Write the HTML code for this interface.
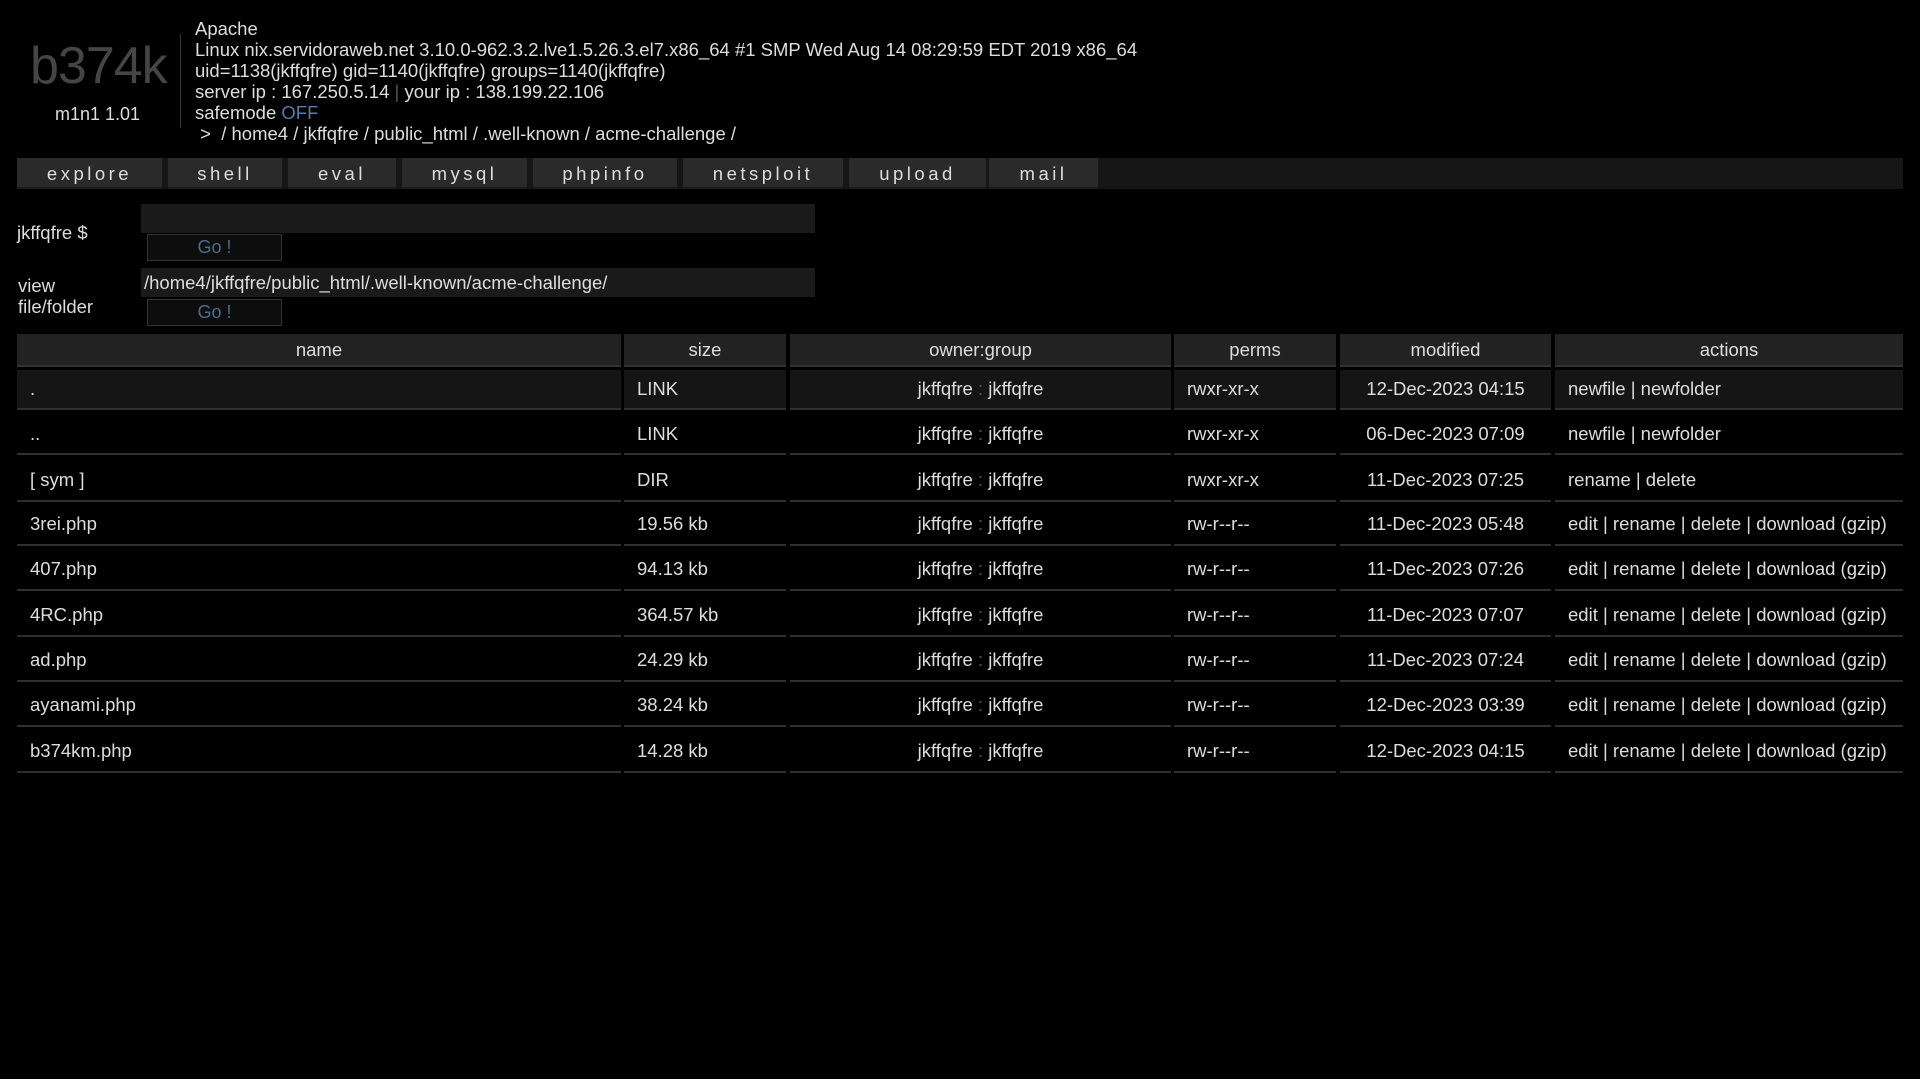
<!DOCTYPE html>
<html><head><meta charset="utf-8"><style>
body{margin:0;background:#000;width:1920px;height:1079px;overflow:hidden;font-family:"Liberation Sans",Arial,sans-serif;color:#ddd;font-size:18.5px;position:relative}
.a{position:absolute;white-space:nowrap}
.logo{left:30px;top:36px;font-size:52px;color:#454545;letter-spacing:-1px}
.ver{left:55px;top:104px;font-size:18px}
.vl{left:180px;top:34px;width:1px;height:94px;background:#333}
.info{left:195px;top:18px;line-height:21px}
.off{color:#5a7aa8}
.nav{left:17px;top:158px;width:1886px;height:31px;background:#161616}
.btn{position:absolute;top:0;height:31px;background:#2a2a2a;text-align:center;line-height:31px;letter-spacing:3.5px;font-size:18.5px;color:#ddd;border-bottom:2px solid #1c1c1c;box-sizing:border-box}
.inp{position:absolute;background:#1a1a1a;box-sizing:border-box;padding-left:3px;line-height:29px}
.go{position:absolute;background:#0d0d0d;border:1px solid #333;box-sizing:border-box;color:#4c6a8c;text-align:center;line-height:25px;font-size:18px}
.c{position:absolute;box-sizing:border-box;border-bottom:2px solid #2e2e2e;padding-left:13px}
.h{background:#222;text-align:center;padding:0;line-height:31px;border-bottom:2px solid #333}
.ctr{text-align:center;padding:0}
</style></head><body>
<div class="a logo">b374k</div>
<div class="a ver">m1n1 1.01</div>
<div class="a vl"></div>
<div class="a info">Apache<br>Linux nix.servidoraweb.net 3.10.0-962.3.2.lve1.5.26.3.el7.x86_64 #1 SMP Wed Aug 14 08:29:59 EDT 2019 x86_64<br>uid=1138(jkffqfre) gid=1140(jkffqfre) groups=1140(jkffqfre)<br>server ip : 167.250.5.14 <span style="color:#555">|</span> your ip : 138.199.22.106<br>safemode <span class="off">OFF</span><br>&nbsp;&gt;&nbsp; / home4 / jkffqfre / public_html / .well-known / acme-challenge /</div>
<div class="a nav">
<div class="btn" style="left:0;width:145px">explore</div>
<div class="btn" style="left:151px;width:114px">shell</div>
<div class="btn" style="left:271px;width:108px">eval</div>
<div class="btn" style="left:385px;width:125px">mysql</div>
<div class="btn" style="left:516px;width:144px">phpinfo</div>
<div class="btn" style="left:666px;width:160px">netsploit</div>
<div class="btn" style="left:832px;width:137px">upload</div>
<div class="btn" style="left:972px;width:109px">mail</div>
</div>
<div class="a" style="left:17px;top:222px">jkffqfre $</div>
<div class="inp" style="left:141px;top:204px;width:674px;height:29px"></div>
<div class="go" style="left:147px;top:234px;width:135px;height:27px">Go !</div>
<div class="a" style="left:18px;top:275px;line-height:21px">view<br>file/folder</div>
<div class="inp" style="left:141px;top:268px;width:674px;height:29px">/home4/jkffqfre/public_html/.well-known/acme-challenge/</div>
<div class="go" style="left:147px;top:299px;width:135px;height:27px">Go !</div>

<div class="c h" style="left:17px;top:334px;width:604px;height:33px">name</div>
<div class="c h" style="left:624px;top:334px;width:162px;height:33px">size</div>
<div class="c h" style="left:790px;top:334px;width:381px;height:33px">owner:group</div>
<div class="c h" style="left:1174px;top:334px;width:162px;height:33px">perms</div>
<div class="c h" style="left:1340px;top:334px;width:211px;height:33px">modified</div>
<div class="c h" style="left:1555px;top:334px;width:348px;height:33px">actions</div>

<div id="rows"></div>
<script>
var rows=[
[".","LINK","rwxr-xr-x","12-Dec-2023 04:15","newfile | newfolder"],
["..","LINK","rwxr-xr-x","06-Dec-2023 07:09","newfile | newfolder"],
["[ sym ]","DIR","rwxr-xr-x","11-Dec-2023 07:25","rename | delete"],
["3rei.php","19.56 kb","rw-r--r--","11-Dec-2023 05:48","edit | rename | delete | download (gzip)"],
["407.php","94.13 kb","rw-r--r--","11-Dec-2023 07:26","edit | rename | delete | download (gzip)"],
["4RC.php","364.57 kb","rw-r--r--","11-Dec-2023 07:07","edit | rename | delete | download (gzip)"],
["ad.php","24.29 kb","rw-r--r--","11-Dec-2023 07:24","edit | rename | delete | download (gzip)"],
["ayanami.php","38.24 kb","rw-r--r--","12-Dec-2023 03:39","edit | rename | delete | download (gzip)"],
["b374km.php","14.28 kb","rw-r--r--","12-Dec-2023 04:15","edit | rename | delete | download (gzip)"]];
var tops=[370,412,457,502,547,592,638,683,728],bots=[410,455,502,546,591,637,682,727,773];
var cols=[[17,604],[624,162],[790,381],[1174,162],[1340,211],[1555,348]];
var h="";
rows.forEach(function(r,i){
 var t=tops[i],hh=bots[i]-t,bg=i==0?"#151515":"#000";
 var vals=[r[0],r[1],"jkffqfre <span style='color:#555'>:</span> jkffqfre",r[2],r[3],r[4]];
 vals.forEach(function(v,j){
  var cls="c"+((j==2||j==4)?" ctr":"");
  h+="<div class='"+cls+"' style='left:"+cols[j][0]+"px;top:"+t+"px;width:"+cols[j][1]+"px;height:"+hh+"px;background:"+bg+";line-height:"+(hh-2+(i==0?0:2))+"px'>"+v+"</div>";
 });
});
document.getElementById("rows").innerHTML=h;
</script>
</body></html>
